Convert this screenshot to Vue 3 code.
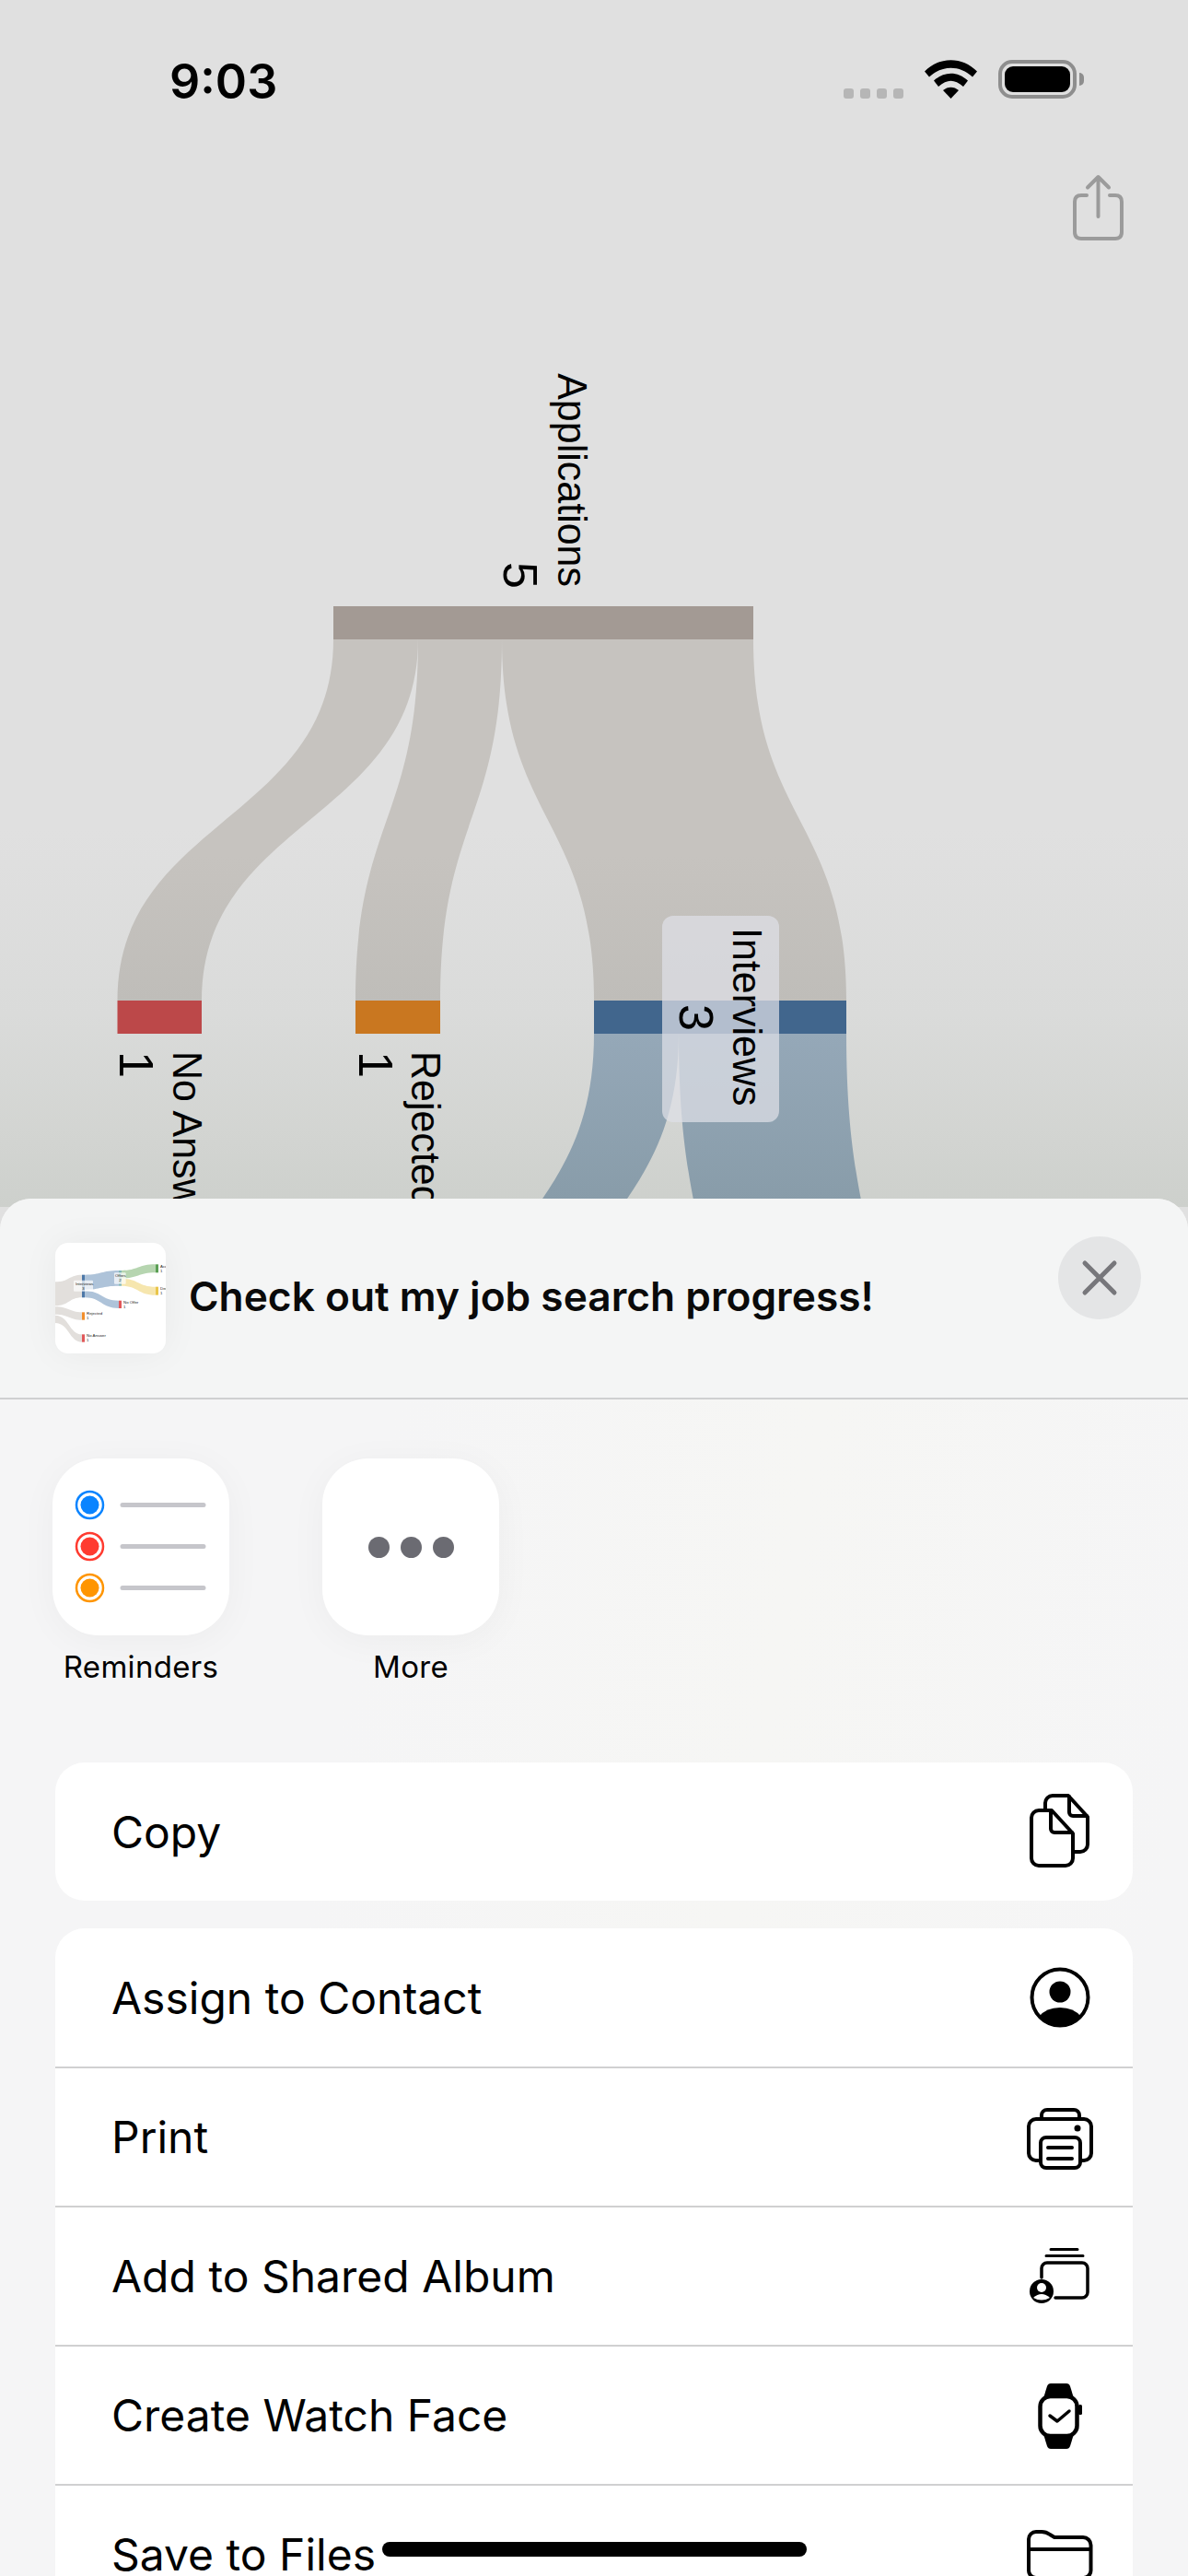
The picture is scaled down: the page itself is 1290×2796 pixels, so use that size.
<script setup>
const rows = ['Assign to Contact', 'Print', 'Add to Shared Album', 'Create Watch Face', 'Save to Files']
</script>

<template>
  <div class="phone">
    <svg class="chart" width="1290" height="1310" viewBox="0 0 1290 1310">
      <defs>
        <linearGradient id="dim" gradientUnits="userSpaceOnUse" x1="0" x2="0" y1="900" y2="1310">
          <stop offset="0" stop-color="#e0e0e0" />
          <stop offset=".49" stop-color="#dadbda" />
          <stop offset=".83" stop-color="#d2d4d1" />
          <stop offset="1" stop-color="#cdd0cc" />
        </linearGradient>
        <linearGradient id="upper" gradientUnits="userSpaceOnUse" x1="0" x2="0" y1="694" y2="1086">
          <stop offset="0" stop-color="#c6c3bf" />
          <stop offset=".6" stop-color="#c6c3bf" />
          <stop offset="1" stop-color="#bfbdb9" />
        </linearGradient>
        <linearGradient id="lower" gradientUnits="userSpaceOnUse" x1="0" x2="0" y1="1122" y2="1305">
          <stop offset="0" stop-color="#95a8b8" />
          <stop offset="1" stop-color="#889ca9" />
        </linearGradient>
      </defs>
      <rect x="0" y="900" width="1290" height="410" fill="url(#dim)" />
      <g fill="url(#upper)">
        <path d="M362 694C362 890 127.500 890 127.500 1086H219C219 890 454 890 454 694Z" />
        <path d="M454 694C454 890 386 890 386 1086H478C478 890 545 890 545 694Z" />
        <path d="M545 694C545 890 645 890 645 1086H919C919 890 818 890 818 694Z" />
      </g>
      <g fill="url(#lower)">
        <path d="M645 1122C645 1318 510 1318 510 1514H602C602 1318 737 1318 737 1122Z" />
        <path d="M737 1122C737 1318 775 1318 775 1514H957C957 1318 919 1318 919 1122Z" />
      </g>
      <rect x="362" y="658" width="456" height="36" fill="#a39a94" />
      <rect x="127.500" y="1086" width="91.500" height="36" fill="#bc4849" />
      <rect x="386" y="1086" width="92" height="36" fill="#c97720" />
      <rect x="645" y="1086" width="274" height="36" fill="#41668d" />
      <rect x="719" y="994" width="127" height="224" rx="12" fill="#dee0e6" fill-opacity=".73" />
      <g class="chart-text">
        <text transform="translate(606 637) rotate(90) scale(1 1.040)" text-anchor="end">Applications</text>
        <text class="num" transform="translate(547 639) rotate(90)" text-anchor="end">5</text>
        <text transform="translate(796 1007) rotate(90) scale(1 1.040)">Interviews</text>
        <text class="num" transform="translate(738 1090) rotate(90)">3</text>
        <text transform="translate(188 1141) rotate(90) scale(1 1.040)">No Answer</text>
        <text class="num" transform="translate(130 1141) rotate(90)">1</text>
        <text transform="translate(447 1141) rotate(90) scale(1 1.040)">Rejected</text>
        <text class="num" transform="translate(390 1141) rotate(90)">1</text>
      </g>
    </svg>

    <header class="status">
      <span class="time">9:03</span>
      <div class="status-icons">
        <div class="signal"><i></i><i></i><i></i><i></i></div>
        <svg width="57" height="42" viewBox="0 0 57 42">
          <path d="M0 12.500C16 -4 41 -4 57 12.500L52 18.500C38 5.500 19 5.500 5 18.500Z" />
          <path d="M10 22.500C21 12 36 12 47 22.500L42 29C32 20.500 25 20.500 15 29Z" />
          <path d="M20 33C25 28.500 32 28.500 37 33L28.500 42Z" />
        </svg>
        <div class="battery"><div class="battery-fill"></div></div>
        <div class="battery-cap"></div>
      </div>
    </header>

    <div class="share-wrap">
      <svg width="60" height="76" viewBox="0 0 60 76" fill="none" stroke="#9b9b9b" stroke-width="4" stroke-linecap="round" stroke-linejoin="round">
        <path d="M18 24H12Q5 24 5 31V64Q5 71 12 71H49Q56 71 56 64V31Q56 24 49 24H43" />
        <path d="M30.500 47V5M19 15.500L30.500 4L42 15.500" />
      </svg>
    </div>

    <section class="sheet">
      <div class="sheet-head">
        <div class="thumb">
          <svg width="120" height="120" viewBox="180 148 360 360">
            <g fill="#e2dfdc">
              <path d="M180 275C225 275 225 252 267 252V326C225 326 225 353 180 353Z" />
              <path d="M180 356C225 356 225 374 267 374V399C225 399 225 381 180 381Z" />
              <path d="M180 384C225 384 225 446 267 446V471C225 471 225 409 180 409Z" />
            </g>
            <path d="M276 252C330 252 330 238 387 238V288C330 288 330 300 276 300Z" fill="#aec3d9" />
            <path d="M276 304C330 304 330 336 387 336V361C330 361 330 326 276 326Z" fill="#aec3d9" />
            <path d="M396 238C450 238 450 218 507 218V245C450 245 450 264 396 264Z" fill="#b6d5b0" />
            <path d="M396 264C450 264 450 291 507 291V318C450 318 450 288 396 288Z" fill="#f6e6ae" />
            <rect x="267" y="252" width="9" height="74" fill="#4d78a8" />
            <rect x="387" y="238" width="9" height="50" fill="#7fb5b5" />
            <rect x="387" y="336" width="9" height="25" fill="#e15759" />
            <rect x="267" y="374" width="9" height="25" fill="#f28e2b" />
            <rect x="267" y="446" width="9" height="25" fill="#e15759" />
            <rect x="507" y="218" width="9" height="27" fill="#5a9f54" />
            <rect x="507" y="291" width="9" height="27" fill="#e9c54a" />
            <rect x="240" y="270" width="63" height="36" rx="3" fill="#fff" fill-opacity=".7" />
            <rect x="372" y="245" width="38" height="37" rx="3" fill="#fff" fill-opacity=".7" />
            <g class="thumb-text">
              <text x="246" y="286">Interviews</text>
              <text x="268" y="300">3</text>
              <text x="375" y="260">Offers</text>
              <text x="388" y="275">2</text>
              <text x="402" y="345">No Offer</text>
              <text x="402" y="360">1</text>
              <text x="282" y="382">Rejected</text>
              <text x="282" y="398">1</text>
              <text x="282" y="455">No Answer</text>
              <text x="282" y="470">1</text>
              <text x="522" y="228">Accepted</text>
              <text x="522" y="243">1</text>
              <text x="522" y="300">Declined</text>
              <text x="522" y="316">1</text>
            </g>
          </svg>
        </div>
        <h1 class="title">Check out my job search progress!</h1>
        <button class="close" aria-label="Close">
          <svg width="40" height="40" viewBox="0 0 40 40" fill="none" stroke="#77777b" stroke-width="5" stroke-linecap="round">
            <path d="M4 4L36 36M36 4L4 36" />
          </svg>
        </button>
      </div>

      <div class="apps">
        <div class="app">
          <div class="app-icon">
            <svg width="192" height="192" viewBox="57 1583 192 192">
              <g fill="none" stroke-width="2.500">
                <circle cx="97.500" cy="1633.500" r="14.500" stroke="#0a84ff" />
                <circle cx="97.500" cy="1678.500" r="14.500" stroke="#ff3b30" />
                <circle cx="97.500" cy="1723.500" r="14.500" stroke="#ff9500" />
              </g>
              <circle cx="97.500" cy="1633.500" r="10" fill="#0a84ff" />
              <circle cx="97.500" cy="1678.500" r="10" fill="#ff3b30" />
              <circle cx="97.500" cy="1723.500" r="10" fill="#ff9500" />
              <g stroke="#c6c6cb" stroke-width="5" stroke-linecap="round">
                <path d="M133 1633.500H221M133 1678.500H221M133 1723.500H221" />
              </g>
            </svg>
          </div>
          <span class="app-label">Reminders</span>
        </div>
        <div class="app">
          <div class="app-icon more"><i></i><i></i><i></i></div>
          <span class="app-label">More</span>
        </div>
      </div>

      <div class="card card-single">
        <div class="row">
          <span>Copy</span>
          <svg class="row-icon" width="100" height="100" viewBox="1100 1939 100 100" fill="none" stroke="#000" stroke-width="4" stroke-linejoin="round" stroke-linecap="round">
            <path d="M1135 1964V1958A8 8 0 0 1 1143 1950H1160L1181 1973V2003A8 8 0 0 1 1173 2011H1167" />
            <path d="M1161 1951V1968A4 4 0 0 0 1165 1972H1180" />
            <path d="M1128 1966H1142L1165 1991V2018A8 8 0 0 1 1157 2026H1128A8 8 0 0 1 1120 2018V1974A8 8 0 0 1 1128 1966Z" />
            <path d="M1141 1967V1986A4 4 0 0 0 1145 1990H1164" />
          </svg>
        </div>
      </div>

      <div class="card">
        <div v-for="(label, i) in rows" :key="label" class="row">
          <span>{{ label }}</span>
          <svg v-if="i === 0" class="row-icon" width="100" height="100" viewBox="1100 2119 100 100">
            <circle cx="1151" cy="2169" r="30.500" fill="none" stroke="#000" stroke-width="4" />
            <circle cx="1151" cy="2163" r="11.500" />
            <path d="M1128 2190Q1136 2180 1151 2180Q1166 2180 1174 2190A30 30 0 0 1 1128 2190Z" />
          </svg>
          <svg v-else-if="i === 1" class="row-icon" width="100" height="100" viewBox="1100 2270 100 100" fill="none" stroke="#000" stroke-width="4" stroke-linejoin="round" stroke-linecap="round">
            <path d="M1131 2299V2296A6 6 0 0 1 1137 2290H1166A6 6 0 0 1 1172 2296V2299" />
            <path d="M1127 2345H1125A8 8 0 0 1 1117 2337V2308A8 8 0 0 1 1125 2300H1177A8 8 0 0 1 1185 2308V2337A8 8 0 0 1 1177 2345H1174" />
            <rect x="1130" y="2320" width="43" height="33" rx="6" />
            <path d="M1138 2331H1164M1138 2343H1164" />
            <circle cx="1170" cy="2310" r="3.500" fill="#000" stroke="none" />
          </svg>
          <svg v-else-if="i === 2" class="row-icon" width="100" height="100" viewBox="1100 2421 100 100" fill="none" stroke="#000" stroke-width="3.500" stroke-linecap="round">
            <path d="M1141 2441.500H1170M1136 2448.500H1176" stroke-width="3" />
            <path d="M1131 2472V2462A6 6 0 0 1 1137 2456H1175A6 6 0 0 1 1181 2462V2488A6 6 0 0 1 1175 2494H1146" />
            <circle cx="1131" cy="2487" r="13" fill="#000" stroke="none" />
            <circle cx="1131" cy="2483" r="5" fill="#fff" stroke="none" />
            <path d="M1122 2494Q1131 2486 1140 2494Q1131 2499 1122 2494Z" fill="#fff" stroke="none" />
          </svg>
          <svg v-else-if="i === 3" class="row-icon" width="100" height="100" viewBox="1100 2572 100 100" fill="none" stroke="#000" stroke-width="4.500" stroke-linecap="round" stroke-linejoin="round">
            <path d="M1141 2587H1158Q1161 2587 1162 2590L1166 2603H1133L1137 2590Q1138 2587 1141 2587Z" fill="#000" stroke="none" />
            <path d="M1141 2658H1158Q1161 2658 1162 2655L1166 2642H1133L1137 2655Q1138 2658 1141 2658Z" fill="#000" stroke="none" />
            <rect x="1129.500" y="2601" width="40" height="43" rx="11" />
            <rect x="1171" y="2610" width="4" height="11" rx="1.500" fill="#000" stroke="none" />
            <path d="M1140 2622L1148 2628L1161 2617" stroke-width="3.500" />
          </svg>
          <svg v-else class="row-icon" width="100" height="100" viewBox="1100 2723 100 100" fill="none" stroke="#000" stroke-width="4" stroke-linejoin="round">
            <path d="M1117 2790V2756A8 8 0 0 1 1125 2748H1131Q1136 2748 1140 2751L1145 2754H1176A8.500 8.500 0 0 1 1184.500 2762.500V2790A8 8 0 0 1 1176.500 2798H1125A8 8 0 0 1 1117 2790Z" />
            <path d="M1117 2767H1185" />
          </svg>
        </div>
      </div>
    </section>

    <div class="home-indicator"></div>
  </div>
</template>

<style scoped>
.phone {
  position: relative;
  width: 1290px;
  height: 2796px;
  overflow: hidden;
  background: #e0e0e0;
  font-family: Inter, "Liberation Sans", sans-serif;
  color: #000;
}
.chart {
  position: absolute;
  left: 0;
  top: 0;
}
.chart-text text {
  font-family: "Liberation Sans", sans-serif;
  font-size: 43px;
  fill: #000;
}
.chart-text .num {
  font-size: 52px;
}
.status {
  position: relative;
  display: flex;
  justify-content: space-between;
  padding: 62px 113px 0 184px;
  height: 50px;
}
.time {
  font-size: 52px;
  line-height: 53px;
  font-weight: 600;
}
.status-icons {
  display: flex;
  align-items: flex-start;
  padding-top: 3px;
}
.signal {
  display: flex;
  gap: 7px;
  margin: 31px 23px 0 0;
}
.signal i {
  width: 11px;
  height: 11px;
  border-radius: 3px;
  background: #b6b6b6;
}
.battery {
  box-sizing: border-box;
  width: 85px;
  height: 42px;
  margin-left: 23px;
  padding: 3px;
  border: 4px solid #8e8e8e;
  border-radius: 15px;
}
.battery-fill {
  height: 100%;
  border-radius: 9px;
  background: #000;
}
.battery-cap {
  width: 5px;
  height: 14px;
  margin: 14px 0 0 3px;
  border-radius: 0 6px 6px 0;
  background: #8e8e8e;
}
.share-wrap {
  position: relative;
  display: flex;
  justify-content: flex-end;
  padding: 76px 68px 0 0;
}
.sheet {
  position: absolute;
  left: 0;
  right: 0;
  top: 1301px;
  height: 1495px;
  overflow: hidden;
  border-radius: 34px 34px 0 0;
  background: linear-gradient(100deg, #f5f5f6 30%, #f6f6f4 60%, #f5f5f6 90%);
}
.sheet-head {
  display: flex;
  align-items: center;
  box-sizing: border-box;
  height: 218px;
  padding: 0 51px 0 60px;
  background: #f4f5f5;
  border-bottom: 2px solid #cfd0d1;
}
.thumb {
  flex: none;
  width: 120px;
  height: 120px;
  overflow: hidden;
  border-radius: 14px;
  background: #fff;
  box-shadow: 0 0 40px rgba(0, 0, 0, 0.05);
}
.thumb-text text {
  font-family: "Liberation Sans", sans-serif;
  font-size: 13px;
  fill: #222;
}
.title {
  flex: 1;
  margin: 0 0 5px 25px;
  font-size: 44.250px;
  line-height: 54px;
  font-weight: 600;
  color: #0a0a0a;
}
.close {
  display: flex;
  align-items: center;
  justify-content: center;
  align-self: flex-start;
  width: 90px;
  height: 90px;
  margin-top: 41px;
  padding: 0;
  border: 0;
  border-radius: 50%;
  background: #e4e5e6;
}
.apps {
  display: flex;
  gap: 101px;
  padding: 64px 0 0 57px;
}
.app {
  display: flex;
  flex-direction: column;
  align-items: center;
  width: 192px;
}
.app-icon {
  width: 192px;
  height: 192px;
  border-radius: 50px;
  background: #fff;
  box-shadow: 0 6px 40px rgba(0, 0, 0, 0.04);
}
.more {
  display: flex;
  align-items: center;
  justify-content: center;
  gap: 12px;
}
.more i {
  width: 23px;
  height: 23px;
  border-radius: 50%;
  background: #6b6b72;
}
.app-label {
  margin-top: 14px;
  font-size: 33px;
  line-height: 40px;
  letter-spacing: 0.3px;
  white-space: nowrap;
}
.card {
  margin: 30px 60px 0;
  overflow: hidden;
  border-radius: 32px;
  background: #fff;
}
.card-single {
  margin-top: 84px;
}
.row {
  display: flex;
  align-items: center;
  justify-content: space-between;
  box-sizing: border-box;
  height: 151px;
  padding: 0 30px 0 61px;
  font-size: 48px;
  border-top: 2px solid #d0d0d1;
}
.row:first-child {
  height: 150px;
  border-top: 0;
}
.row-icon {
  flex: none;
}
.home-indicator {
  position: absolute;
  left: 415px;
  bottom: 21px;
  width: 461px;
  height: 16px;
  border-radius: 8px;
  background: #000;
}
</style>
